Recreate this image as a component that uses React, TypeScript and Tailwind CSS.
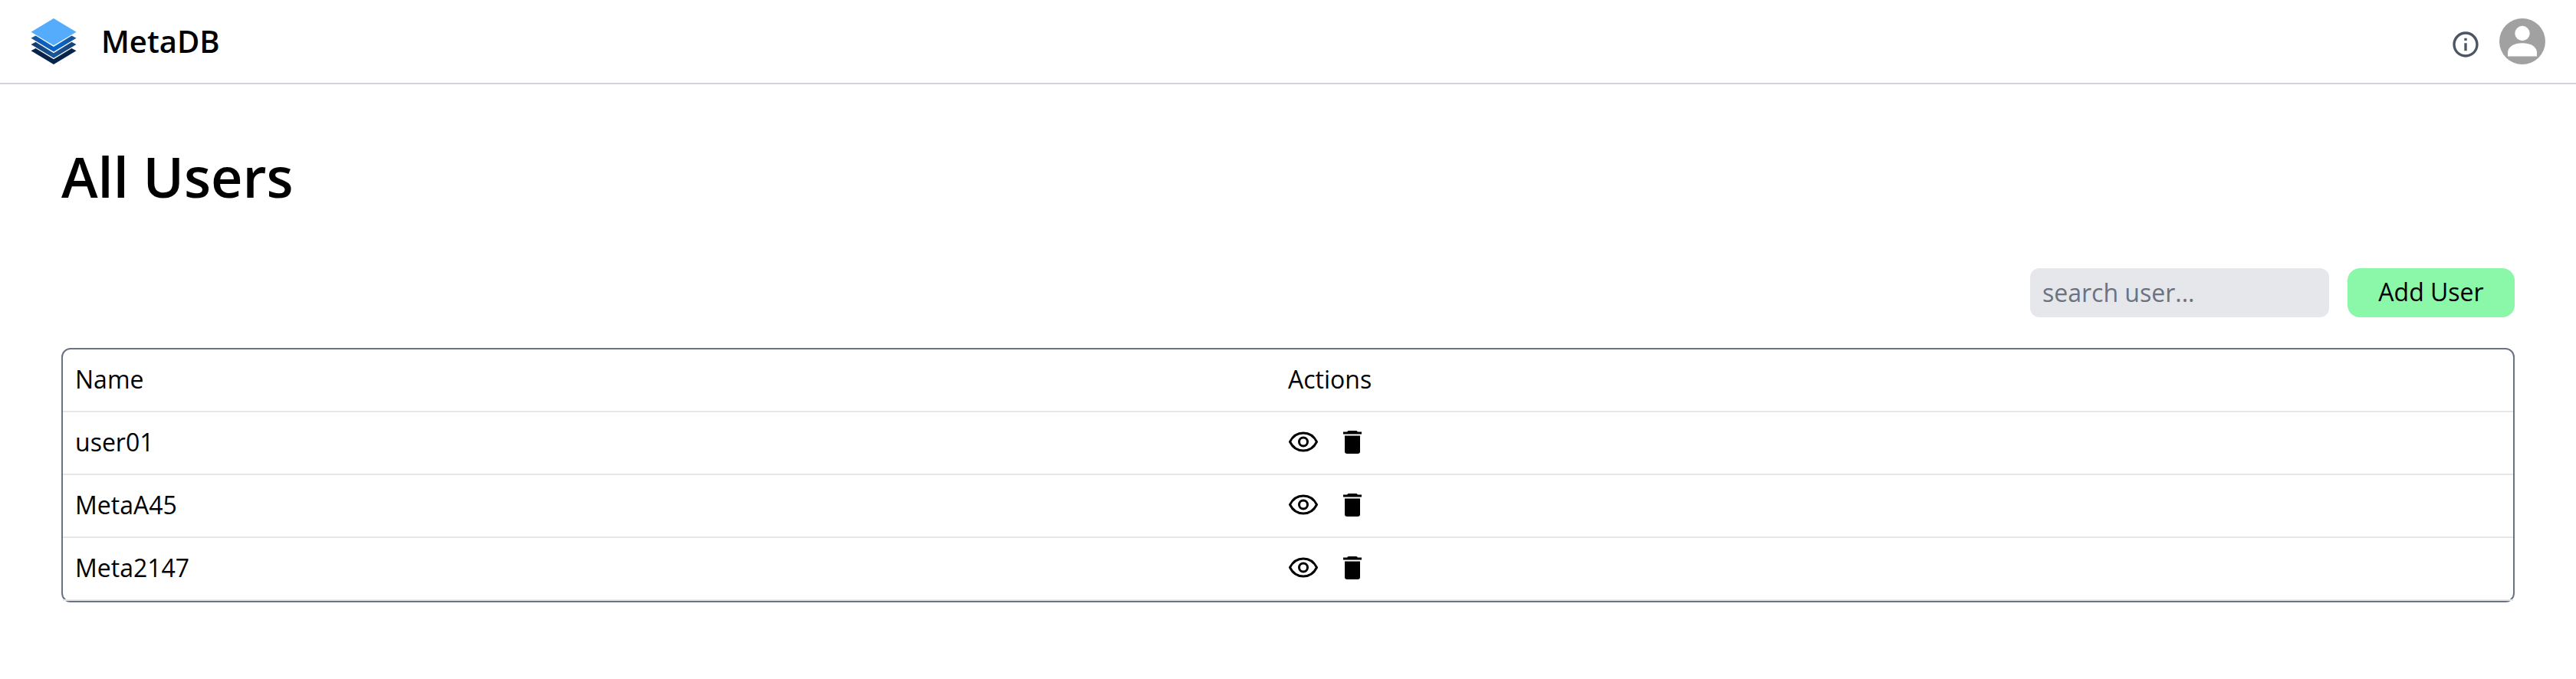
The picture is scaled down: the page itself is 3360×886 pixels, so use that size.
import React from "react";
import { MdOutlineInfo } from "react-icons/md";

const users = ["user01", "MetaA45", "Meta2147"];

function Logo() {
  return (
    <svg viewBox="0 0 60 60" className="size-15" aria-hidden="true">
      <defs>
        <linearGradient id="upper" x1="0" x2="1">
          <stop offset="0" stopColor="#1a4f8e" />
          <stop offset="0.2" stopColor="#0d5cb5" />
          <stop offset="0.6" stopColor="#0866cc" />
          <stop offset="1" stopColor="#1a4f8e" />
        </linearGradient>
        <linearGradient id="lower" x1="0" x2="1">
          <stop offset="0" stopColor="#123a6c" />
          <stop offset="0.5" stopColor="#1c5698" />
          <stop offset="1" stopColor="#163f73" />
        </linearGradient>
      </defs>
      <path d="M.5 42.300 6.500 39 30 53.300 53.500 39 59.500 42.300 30 60Z" fill="#08244a" />
      <path d="M.5 34 6.500 30.700 30 45.300 53.500 30.700 59.500 34 30 51.700Z" fill="url(#lower)" />
      <path d="M.5 25.700 6.500 22.400 30 37 53.500 22.400 59.500 25.700 30 43.400Z" fill="url(#upper)" />
      <path d="M30 0 59.500 17.700 30 35.200 .5 17.700Z" fill="#55acfd" />
    </svg>
  );
}

function Avatar() {
  return (
    <svg viewBox="0 0 60 60" className="size-15" aria-hidden="true">
      <circle cx="30" cy="30" r="30" fill="#a1a1a1" />
      <circle cx="30" cy="19.500" r="9.700" fill="#fff" />
      <path d="M11 49.500V45C11 37 19 32.300 30 32.300S49 37 49 45V49.500Z" fill="#fff" />
    </svg>
  );
}

function Eye() {
  return (
    <svg viewBox="0 0 40 28" className="h-7 w-10" fill="none" stroke="#000" aria-hidden="true">
      <path
        d="M2.500 13.500C6 6.500 12.500 2 20 2S34 6.500 37.500 13.500C34 20.500 27.500 25 20 25S6 20.500 2.500 13.500Z"
        strokeWidth="3"
        strokeLinejoin="round"
      />
      <circle cx="20" cy="13.500" r="5.500" strokeWidth="3" />
    </svg>
  );
}

function Trash() {
  return (
    <svg viewBox="0 0 40 40" className="size-10" aria-hidden="true">
      <path d="M14.500 5H25.500L27 6.500H32V9.500H8V6.500H13Z" />
      <path d="M10 11.500H30V32Q30 35 27 35H13Q10 35 10 32Z" />
    </svg>
  );
}

export default function App() {
  return (
    <div className="bg-white font-['Open_Sans',sans-serif] text-[32px] leading-12 text-black">
      <header className="flex h-[110px] items-center justify-between border-b-2 border-[#d1d5db] px-10">
        <a href="#" className="flex items-center gap-8">
          <Logo />
          <span className="text-[40px] font-semibold">MetaDB</span>
        </a>
        <div className="flex items-end gap-6">
          <button type="button" aria-label="Information" className="pb-[6px]">
            <MdOutlineInfo className="size-10 text-[#4b5563]" />
          </button>
          <button type="button" aria-label="Account">
            <Avatar />
          </button>
        </div>
      </header>
      <main className="px-20 pt-20">
        <h1 className="text-[72px] leading-20 font-semibold">All Users</h1>
        <div className="mt-20 flex justify-end gap-6">
          <input
            type="text"
            aria-label="Search user"
            placeholder="search user..."
            className="h-16 w-[390px] rounded-xl bg-[#e5e7eb] px-4 pb-[2px] placeholder:text-[#6b7280]"
          />
          <button type="button" className="h-16 w-[218px] rounded-2xl bg-[#8bf7a8] pb-[2px]">
            Add User
          </button>
        </div>
        <div className="mt-10 rounded-xl border-2 border-[#6b7280]">
          <table className="w-full table-fixed border-separate border-spacing-0 text-left">
            <thead>
              <tr className="h-[82px]">
                <th className="border-b-2 border-[#e5e7eb] pb-[2px] pl-4 font-normal">Name</th>
                <th className="border-b-2 border-[#e5e7eb] pb-[2px] font-normal">Actions</th>
              </tr>
            </thead>
            <tbody>
              {users.map((name) => (
                <tr key={name} className="h-[82px]">
                  <td className="border-b-2 border-[#e5e7eb] pb-[2px] pl-4">{name}</td>
                  <td className="border-b-2 border-[#e5e7eb] pb-[2px]">
                    <div className="flex items-center gap-6">
                      <button type="button" aria-label={`View ${name}`}>
                        <Eye />
                      </button>
                      <button type="button" aria-label={`Delete ${name}`}>
                        <Trash />
                      </button>
                    </div>
                  </td>
                </tr>
              ))}
            </tbody>
          </table>
        </div>
      </main>
    </div>
  );
}
